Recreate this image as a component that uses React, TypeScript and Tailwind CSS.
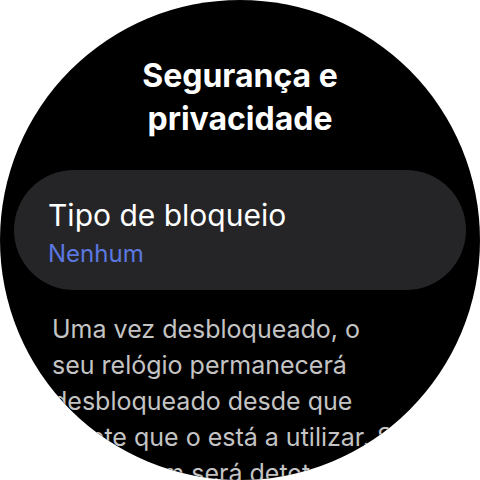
export default function App() {
  return (
    <div className="w-[480px] h-[480px] bg-white">
      <div
        className="w-[480px] h-[480px] rounded-full bg-black overflow-hidden flex flex-col"
        style={{ fontFamily: "Inter, Roboto, sans-serif" }}
      >
        {/* Header */}
        <h1 className="shrink-0 pt-[54px] text-center text-[32px] leading-[43px] font-bold text-white">
          Segurança e
          <br />
          privacidade
        </h1>

        {/* Lock type card */}
        <div className="shrink-0 mt-[30px] mx-[14px] h-[120px] rounded-full bg-[#252527] px-[34px] pt-[5px] flex flex-col justify-center">
          <p className="text-[30px] leading-[38px] text-white">Tipo de bloqueio</p>
          <p className="mt-[4px] text-[24px] leading-[32px] text-[#5b78e0]">Nenhum</p>
        </div>

        {/* Description */}
        <p className="shrink-0 mt-[21px] ml-[52px] w-[360px] text-[25px] leading-[36px] text-[#c4c4c4]">
          Uma vez desbloqueado, o
          <br />
          seu relógio permanecerá desbloqueado desde que detete que o está a
          utilizar. Se o usar bem será detetado
        </p>
      </div>
    </div>
  );
}
